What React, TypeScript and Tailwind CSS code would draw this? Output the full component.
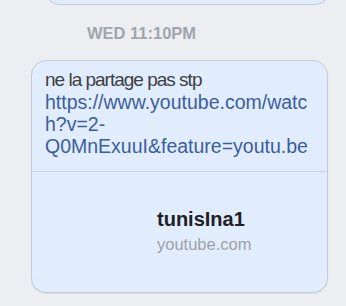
import React from "react";

const App = () => {
  return (
    <div
      className="w-[346px] h-[306px] overflow-hidden bg-[#edeef2] relative"
      style={{ fontFamily: '"Liberation Sans", Arial, sans-serif' }}
    >
      {/* previous bubble, cut off at the top */}
      <div className="ml-[46px] w-[281px] h-[4px] -mt-[20px] box-content pt-[20px] rounded-b-[14px] border border-t-0 border-[#c3ccd9] bg-[#e1edfd]" />

      <div className="pl-[87px] pt-[20px] h-[55px] text-[16.5px] font-bold text-[#a1a5ad] leading-none">
        WED 11:10PM
      </div>

      <div className="ml-[31px] w-[297px] h-[233px] rounded-[15px] border border-[#c3ccd9] bg-[#e1edfd] overflow-hidden shadow-[0_1px_1px_rgba(0,0,0,0.08)]">
        <div className="px-[13px] pt-[8px] leading-[22px]">
          <div className="text-[19px] text-[#3d3f44] tracking-[-1px]">ne la partage pas stp</div>
          <div className="text-[19.5px] text-[#3b5d9e] whitespace-nowrap">
            https://www.youtube.com/watc
            <br />
            h?v=2-
            <br />
            Q0MnExuuI&amp;feature=youtu.be
          </div>
        </div>
        <div className="mt-[14px] border-t border-[#ccd3dc]" />
        <div className="pl-[125px] pt-[35px]">
          <div className="text-[20px] font-bold text-[#1f2126] leading-[24px]">
            tunisIna1
          </div>
          <div className="text-[16.5px] text-[#9ea2a8] leading-[20px] mt-[3px]">
            youtube.com
          </div>
        </div>
      </div>
    </div>
  );
};

export default App;
